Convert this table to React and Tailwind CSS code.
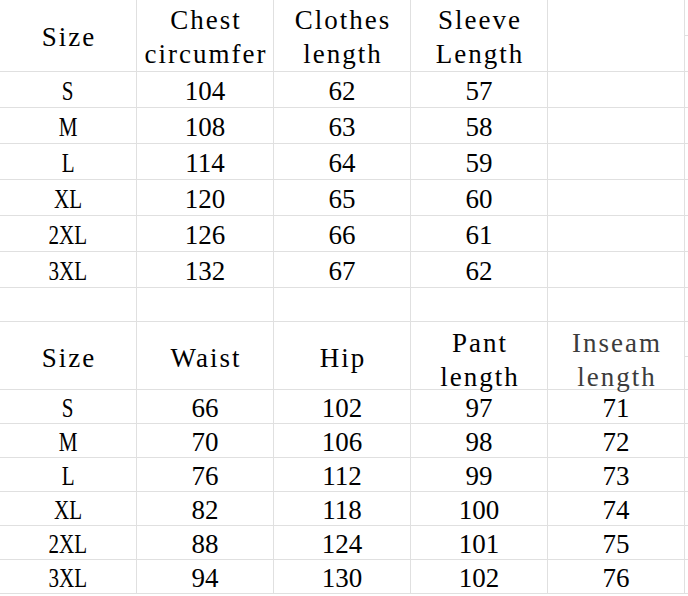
import React from 'react';

const topRows = [
  ['S', 104, 62, 57],
  ['M', 108, 63, 58],
  ['L', 114, 64, 59],
  ['XL', 120, 65, 60],
  ['2XL', 126, 66, 61],
  ['3XL', 132, 67, 62],
];

const bottomRows = [
  ['S', 66, 102, 97, 71],
  ['M', 70, 106, 98, 72],
  ['L', 76, 112, 99, 73],
  ['XL', 82, 118, 100, 74],
  ['2XL', 88, 124, 101, 75],
  ['3XL', 94, 130, 102, 76],
];

const line = 'border-r border-b border-[#e0e0e0]';

const Head = ({ lines, h, shift, muted }) => (
  <div className={`${line} ${h} ${shift} flex flex-col items-center justify-center ${muted ? 'text-[#3c3c3c]' : 'text-black'}`}>
    {lines.map((t) => (
      <span
        key={t}
        className="block pl-[2px] font-['Liberation_Serif',serif] text-[27px] leading-[34px] tracking-[2px] whitespace-nowrap">
        {t}
      </span>
    ))}
  </div>
);

const Size = ({ label, h }) => (
  <div className={`${line} ${h} flex items-center justify-center pt-[4px]`}>
    <span className="inline-block scale-x-[0.78] font-['Liberation_Serif',serif] text-[27px] leading-none text-black">{label}</span>
  </div>
);

const Num = ({ v, h }) => (
  <div className={`${line} ${h} flex items-center justify-center pt-[4px] font-['Liberation_Serif',serif] text-[27px] leading-none text-black`}>
    {v}
  </div>
);

const Sliver = ({ top, h }) => (
  <div className={`border-b border-[#e0e0e0] ${h} flex flex-col`}>
    <div className={`border-b border-[#e0e0e0] ${top}`} />
  </div>
);

export default function App() {
  return (
    <div className="w-[688px] h-[596px] overflow-hidden bg-white">
      <div className="grid grid-cols-[137px_137px_137px_137px_137px_1fr]">
        <Head lines={['Size']} h="h-[72px]" shift="pt-[3px]" />
        <Head lines={['Chest', 'circumfer']} h="h-[72px]" shift="pt-[3px]" />
        <Head lines={['Clothes', 'length']} h="h-[72px]" shift="pt-[3px]" />
        <Head lines={['Sleeve', 'Length']} h="h-[72px]" shift="pt-[3px]" />
        <div className={`${line} h-[72px]`} />
        <Sliver top="h-[36px]" h="h-[72px]" />

        {topRows.map(([s, a, b, c]) => (
          <React.Fragment key={s}>
            <Size label={s} h="h-[36px]" />
            <Num v={a} h="h-[36px]" />
            <Num v={b} h="h-[36px]" />
            <Num v={c} h="h-[36px]" />
            <div className={`${line} h-[36px]`} />
            <div className="h-[36px] border-b border-[#e0e0e0]" />
          </React.Fragment>
        ))}

        <div className={`${line} h-[34px]`} />
        <div className={`${line} h-[34px]`} />
        <div className={`${line} h-[34px]`} />
        <div className={`${line} h-[34px]`} />
        <div className={`${line} h-[34px]`} />
        <div className="h-[34px] border-b border-[#e0e0e0]" />

        <Head lines={['Size']} h="h-[68px]" shift="pt-[5px]" />
        <Head lines={['Waist']} h="h-[68px]" shift="pt-[5px]" />
        <Head lines={['Hip']} h="h-[68px]" shift="pt-[5px]" />
        <Head lines={['Pant', 'length']} h="h-[68px]" shift="pt-[8px]" />
        <Head lines={['Inseam', 'length']} h="h-[68px]" shift="pt-[8px]" muted />
        <Sliver top="h-[35px]" h="h-[68px]" />

        {bottomRows.map(([s, a, b, c, d]) => (
          <React.Fragment key={s}>
            <Size label={s} h="h-[34px]" />
            <Num v={a} h="h-[34px]" />
            <Num v={b} h="h-[34px]" />
            <Num v={c} h="h-[34px]" />
            <Num v={d} h="h-[34px]" />
            <div className="h-[34px] border-b border-[#e0e0e0]" />
          </React.Fragment>
        ))}
      </div>
    </div>
  );
}
